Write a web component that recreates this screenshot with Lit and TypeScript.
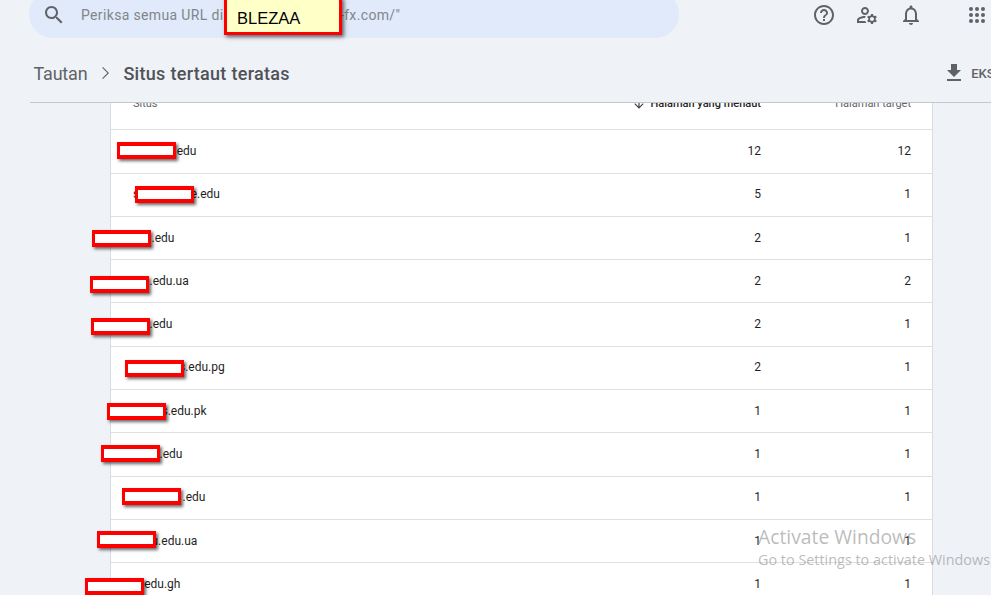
import { LitElement, html, css, svg } from "lit";
import { customElement } from "lit/decorators.js";

interface Row { lead?: string; suffix: string; start: number; a: number; b: number; boxX: number; boxY: number }

const ROWS: Row[] = [
  { suffix: ".edu", start: 173.5, a: 12, b: 12, boxX: 117, boxY: 142 },
  { lead: "s", suffix: "e.edu", start: 190.5, a: 5, b: 1, boxX: 135, boxY: 186 },
  { suffix: ".edu", start: 151.5, a: 2, b: 1, boxX: 92, boxY: 230 },
  { suffix: ".edu.ua", start: 149.5, a: 2, b: 2, boxX: 90, boxY: 276 },
  { suffix: ".edu", start: 149.5, a: 2, b: 1, boxX: 91, boxY: 318 },
  { suffix: "s.edu.pg", start: 179, a: 2, b: 1, boxX: 125, boxY: 360 },
  { suffix: "s.edu.pk", start: 161.5, a: 1, b: 1, boxX: 107, boxY: 403 },
  { suffix: ".edu", start: 159.5, a: 1, b: 1, boxX: 101, boxY: 445 },
  { suffix: ".edu", start: 182.5, a: 1, b: 1, boxX: 122, boxY: 488 },
  { suffix: "u.edu.ua", start: 151.5, a: 1, b: 1, boxX: 97, boxY: 531 },
  { suffix: ".edu.gh", start: 141, a: 1, b: 1, boxX: 85, boxY: 578 },
];

const icon = (paths: unknown, cls = "") => html`<svg class="icon ${cls}" viewBox="0 0 24 24" width="24" height="24">${paths}</svg>`;

const SEARCH = svg`<path d="M15.5 14h-.79l-.28-.27C15.41 12.59 16 11.11 16 9.5 16 5.91 13.09 3 9.5 3S3 5.91 3 9.5 5.91 16 9.5 16c1.61 0 3.09-.59 4.23-1.57l.27.28v.79l5 4.99L20.49 19l-4.99-5zm-6 0C7.01 14 5 11.99 5 9.5S7.01 5 9.5 5 14 7.01 14 9.5 11.99 14 9.5 14z"/>`;
const HELP = svg`<path d="M11 18h2v-2h-2v2zm1-16C6.48 2 2 6.48 2 12s4.48 10 10 10 10-4.48 10-10S17.52 2 12 2zm0 18c-4.41 0-8-3.59-8-8s3.59-8 8-8 8 3.59 8 8-3.59 8-8 8zm0-14c-2.21 0-4 1.79-4 4h2c0-1.1.9-2 2-2s2 .9 2 2c0 2-3 1.75-3 5h2c0-2.25 3-2.5 3-5 0-2.21-1.79-4-4-4z"/>`;
const MANAGE = svg`<path d="M4 18v-.65c0-.34.16-.66.41-.81C6.1 15.53 8.03 15 10 15c.03 0 .05 0 .08.01.1-.7.3-1.37.59-1.98-.22-.02-.44-.03-.67-.03-2.42 0-4.68.67-6.61 1.82-.88.52-1.39 1.5-1.39 2.53V20h9.26c-.42-.6-.75-1.28-.97-2H4z"/><path d="M10 12c2.21 0 4-1.79 4-4s-1.79-4-4-4-4 1.79-4 4 1.79 4 4 4zm0-6c1.1 0 2 .9 2 2s-.9 2-2 2-2-.9-2-2 .9-2 2-2z"/><path d="M20.75 16c0-.22-.03-.42-.06-.63l1.14-1.01-1-1.73-1.45.49c-.32-.27-.68-.48-1.08-.63L18 11h-2l-.3 1.49c-.4.15-.76.36-1.08.63l-1.45-.49-1 1.73 1.14 1.01c-.03.21-.06.41-.06.63s.03.42.06.63l-1.14 1.01 1 1.73 1.45-.49c.32.27.68.48 1.08.63L16 21h2l.3-1.49c.4-.15.76-.36 1.08-.63l1.45.49 1-1.73-1.14-1.01c.03-.21.06-.41.06-.63zM17 18c-1.1 0-2-.9-2-2s.9-2 2-2 2 .9 2 2-.9 2-2 2z"/>`;
const BELL = svg`<path d="M12 22c1.1 0 2-.9 2-2h-4c0 1.1.9 2 2 2zm6-6v-5c0-3.07-1.63-5.64-4.5-6.32V4c0-.83-.67-1.5-1.5-1.5s-1.5.67-1.5 1.5v.68C7.64 5.36 6 7.92 6 11v5l-2 2v1h16v-1l-2-2zm-2 1H8v-6c0-2.48 1.51-4.5 4-4.5s4 2.02 4 4.5v6z"/>`;
const APPS = svg`${[6, 12, 18].map((y) => [6, 12, 18].map((x) => svg`<circle cx=${x} cy=${y} r="2"/>`))}`;
const DOWNLOAD = svg`<path d="M19 9h-4V3H9v6H5l7 7 7-7zM5 18v2h14v-2H5z"/>`;
const ARROW = svg`<path d="M20 12l-1.41-1.41L13 16.17V4h-2v12.17l-5.58-5.59L4 12l8 8 8-8z"/>`;
const CHEVRON = svg`<path d="M10 6L9.2 6.8 14.4 12l-5.2 5.2.8.8 6-6z"/>`;

@customElement("app-root")
export class AppRoot extends LitElement {
  static styles = css`
    :host {
      display: block;
      position: relative;
      width: 991px;
      height: 595px;
      overflow: hidden;
      background: #eff2f7;
      font-family: Roboto, "Liberation Sans", sans-serif;
      color: #1f1f1f;
    }
    .page { display: flex; flex-direction: column; height: 595px; }
    .icon { fill: #5f6368; flex: none; display: block; }
    .top {
      display: flex;
      align-items: center;
      height: 48px;
      margin-top: -10px;
      padding-left: 29px;
      flex: none;
    }
    .pill {
      width: 650px;
      height: 48px;
      box-sizing: border-box;
      background: #e1eafa;
      border-radius: 24px;
      display: flex;
      align-items: center;
      padding: 2px 0 0 13px;
      gap: 15px;
    }
    .placeholder { font-size: 14px; letter-spacing: 0.35px; color: #80868b; white-space: nowrap; }
    .actions { display: flex; align-items: center; margin: 2px 0 0 133px; }
    .a-manage { margin-left: 19px; }
    .a-bell { margin-left: 20px; }
    .a-apps { margin-left: 42px; }
    .crumbs {
      height: 64px;
      box-sizing: border-box;
      flex: none;
      display: flex;
      align-items: center;
      padding: 6px 0 0 33.5px;
      font-size: 18px;
      color: #5f6368;
      white-space: nowrap;
    }
    .home { letter-spacing: -0.2px; }
    .chevron { margin: 0 6px 0 6px; width: 24px; height: 24px; }
    .current { font-weight: 500; color: #4f5357; letter-spacing: 0.3px; }
    .export {
      margin-left: auto;
      display: flex;
      align-items: center;
      gap: 2px;
      font-size: 13px;
      font-weight: 500;
      color: #5f6368;
      width: 49px;
      overflow: hidden;
      flex: none;
    }
    .rule { height: 1px; margin-left: 30px; background: #c5c7ca; flex: none; }
    .scroll { flex: 1; overflow: hidden; }
    .card {
      width: 823px;
      box-sizing: border-box;
      margin: -20px 0 0 110px;
      background: #fff;
      border-left: 1px solid #dadce0;
      border-right: 1px solid #dadce0;
      font-size: 12px;
    }
    .row {
      display: grid;
      grid-template-columns: 1fr 150px 150px;
      padding: 0 21px 1px 22px;
      align-items: center;
      box-sizing: border-box;
      height: 43.3px;
      border-bottom: 1px solid #e0e0e0;
    }
    .head {
      height: 47.3px;
      align-items: start;
      padding-top: 13px;
      line-height: 16px;
      font-size: 11px;
      color: #5f6368;
      font-weight: 400;
    }
    .sorted {
      display: flex;
      justify-content: flex-end;
      align-items: center;
      gap: 5px;
      color: #1f1f1f;
      font-weight: 500;
      white-space: nowrap;
      margin-left: -60px;
    }
    .sorted .icon { fill: #3c4043; }
    .num { text-align: right; }
    .site { display: flex; white-space: nowrap; }
    .gap { display: block; flex: none; }
    .redact {
      position: absolute;
      width: 59px;
      height: 17px;
      box-sizing: border-box;
      background: #fff;
      border-style: solid;
      border-color: #f00;
      border-width: 4px 3px;
      box-shadow: 2px 2px 3px rgba(0, 0, 0, 0.6);
    }
    .note {
      position: absolute;
      left: 224px;
      top: -3px;
      width: 118px;
      height: 38px;
      box-sizing: border-box;
      padding: 9px 0 0 10px;
      background: #ffffc8;
      border: 3px solid #f00;
      box-shadow: 2px 2px 4px rgba(0, 0, 0, 0.6);
      font: 16.5px "Liberation Sans", Arial, sans-serif;
      line-height: 18px;
      color: #000;
    }
    .activate {
      position: absolute;
      left: 758px;
      top: 523px;
      font-family: "Open Sans", sans-serif;
      color: rgba(130, 130, 130, 0.55);
      white-space: nowrap;
    }
    .activate div:first-child { font-size: 19.3px; line-height: 27px; }
    .activate div:last-child { font-size: 14.4px; line-height: 20px; }
  `;

  render() {
    return html`
      <div class="page">
        <div class="top">
          <div class="pill">
            ${icon(SEARCH)}
            <span class="placeholder">Periksa semua URL di "https://m.blezaa-fx.com/"</span>
          </div>
          <div class="actions">
            ${icon(HELP)}
            ${icon(MANAGE, "a-manage")}
            ${icon(BELL, "a-bell")}
            ${icon(APPS, "a-apps")}
          </div>
        </div>
        <div class="crumbs">
          <span class="home">Tautan</span>
          <svg class="icon chevron" viewBox="0 0 24 24">${CHEVRON}</svg>
          <span class="current">Situs tertaut teratas</span>
          <div class="export">${icon(DOWNLOAD)}<span>&nbsp;EKSPOR</span></div>
        </div>
        <div class="rule"></div>
        <div class="scroll">
          <div class="card">
            <div class="row head">
              <div>Situs</div>
              <div class="sorted">
                <svg class="icon" viewBox="0 0 24 24" width="14" height="14">${ARROW}</svg>
                <span>Halaman yang menaut</span>
              </div>
              <div class="num">Halaman target</div>
            </div>
            ${ROWS.map(
              (r) => html`
                <div class="row">
                  <div class="site">
                    ${r.lead ?? ""}<span class="gap" style="width:${r.start - 133 - (r.lead ? 6 : 0)}px"></span>${r.suffix}
                  </div>
                  <div class="num">${r.a}</div>
                  <div class="num">${r.b}</div>
                </div>
              `
            )}
          </div>
        </div>
      </div>
      ${ROWS.map((r) => html`<div class="redact" style="left:${r.boxX}px;top:${r.boxY}px"></div>`)}
      <div class="note">BLEZAA</div>
      <div class="activate">
        <div>Activate Windows</div>
        <div>Go to Settings to activate Windows</div>
      </div>
    `;
  }
}
